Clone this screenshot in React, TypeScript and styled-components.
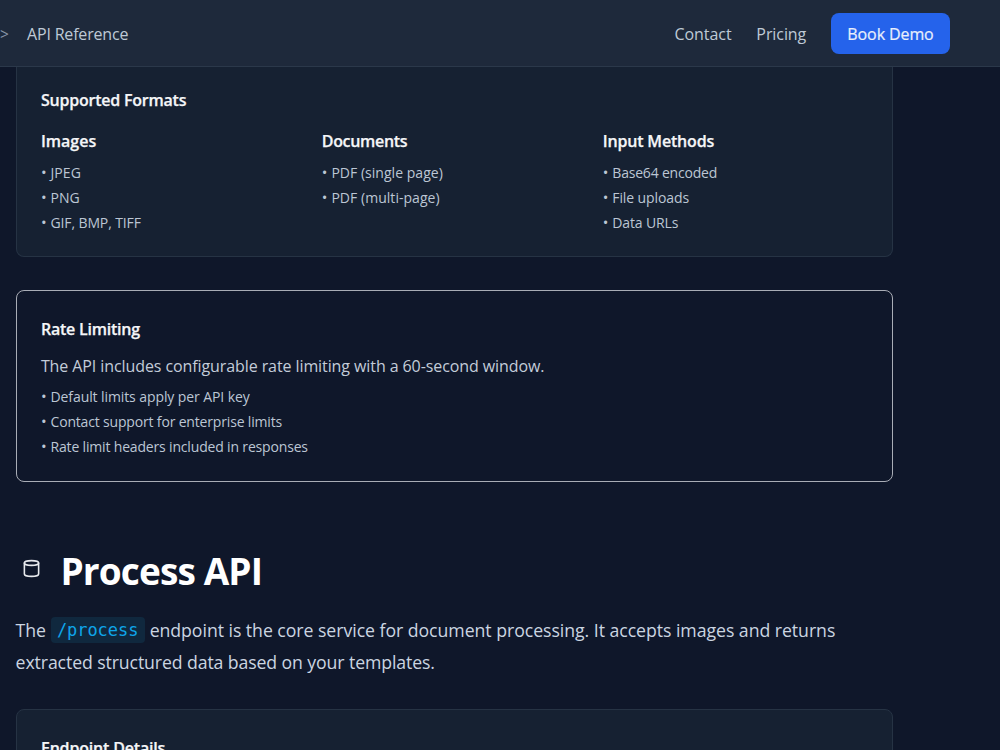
import styled, { createGlobalStyle } from "styled-components";

const Global = createGlobalStyle`
  * { box-sizing: border-box; margin: 0; padding: 0; }
  body { background: #0f172a; overflow: hidden; font-family: "Open Sans", "Noto Sans", sans-serif; }
`;
const Page = styled.div`display: flex; flex-direction: column; height: 750px; overflow: hidden; background: #0f172a;`;
const Header = styled.header`
  display: flex; align-items: center; flex: none; height: 67px; padding-right: 50px;
  background: #1e293b; border-bottom: 1px solid #2b384a; color: #bfc9d6; font-size: 16px; line-height: 24px;
`;
const Crumb = styled.span`width: 27px; padding-top: 2px; color: #8793a6; font-size: 15.5px;`;
const Label = styled.span<{ $ls?: number; $drop?: number }>`
  padding-top: ${p => p.$drop ?? 0}px; letter-spacing: ${p => p.$ls ?? 0}px; white-space: nowrap;
`;
const Nav = styled.nav`display: flex; align-items: center; margin-left: auto;`;
const NavLink = styled.a<{ $ls: number }>`padding-top: 2px; letter-spacing: ${p => p.$ls}px; margin-right: 24.8px;`;
const Demo = styled.button`
  width: 119px; height: 41px; padding-top: 1px; border: 0; border-radius: 8px; background: #2563eb; color: #e9effc;
  font: 500 16px "Open Sans", sans-serif; letter-spacing: -0.1px; text-align: center; -webkit-text-stroke: 0.2px #e9effc;
`;
const Main = styled.main`display: flex; flex-direction: column; flex: 1; min-height: 0; width: 892.6px; padding-left: 15.6px;`;
const Card = styled.section<{ $h: number; $kind?: "top" | "outline" }>`
  flex: none; height: ${p => p.$h}px; padding: ${p => (p.$kind === "top" ? 21 : 26)}px 24px 0 24.3px;
  border: 1px solid ${p => (p.$kind === "outline" ? "#a9adb6" : "#263344")};
  background: ${p => (p.$kind === "outline" ? "transparent" : "#162132")};
  border-radius: ${p => (p.$kind === "top" ? "0 0 8px 8px" : "8px")};
  margin-top: ${p => (p.$kind === "outline" ? 33 : 0)}px;
  ${p => p.$kind === "top" && "border-top: 0;"}
`;
const Heading = styled.h4<{ $ls: number; $gap?: number }>`
  color: #f5f6f8; font-size: 16px; font-weight: 600; line-height: 25px; letter-spacing: ${p => p.$ls}px;
  margin-bottom: ${p => p.$gap ?? 0}px; white-space: nowrap; -webkit-text-stroke: 0.25px #f5f6f8;
`;
const Columns = styled.div`display: grid; grid-template-columns: repeat(3, 1fr); column-gap: 16px;`;
const List = styled.ul`list-style: none; color: #bcc6d4; font-size: 14px; line-height: 25px;`;
const Item = styled.li<{ $ls: number }>`display: flex; letter-spacing: ${p => p.$ls}px; white-space: nowrap;`;
const Dot = styled.span`width: 9.6px; font-size: 15px; letter-spacing: 0;`;
const Note = styled.p`color: #c3ccd9; font-size: 16px; line-height: 25px; letter-spacing: -0.09px; margin-bottom: 5px;`;
const TitleRow = styled.div`display: flex; align-items: center; flex: none; height: 46px; margin-top: 67px; padding-left: 6.4px;`;
const Cylinder = styled.svg`display: block; width: 19px; height: 19px; margin: -7px 19.5px 0 0;`;
const Title = styled.h2`margin-top: -3px; color: #fff; font-size: 37px; font-weight: 700; line-height: 46px; letter-spacing: -0.88px;`;
const Lead = styled.div`flex: none; margin: 19px 0 31px; color: #cbd5e1; font-size: 17.7px; line-height: 32px;`;
const Line = styled.div`display: flex; height: 32px; white-space: nowrap;`;
const Code = styled.code`
  height: 26px; width: 94px; margin: 3px 5px 0 4.8px; border-radius: 4px; background: #10283e; color: #0ea5e9;
  font: 17px/27px "DejaVu Sans Mono", monospace; letter-spacing: -0.05px; text-align: center;
`;

type Entry = [string, number];
const formats: { title: Entry; items: Entry[] }[] = [
  { title: ["Images", 0], items: [["JPEG", 0.1], ["PNG", 0.05], ["GIF, BMP, TIFF", -0.12]] },
  { title: ["Documents", -0.33], items: [["PDF (single page)", 0.03], ["PDF (multi-page)", 0.04]] },
  { title: ["Input Methods", -0.17], items: [["Base64 encoded", -0.2], ["File uploads", -0.1], ["Data URLs", -0.13]] },
];
const limits: Entry[] = [
  ["Default limits apply per API key", -0.09],
  ["Contact support for enterprise limits", -0.17],
  ["Rate limit headers included in responses", -0.17],
];
const Bullets = ({ items }: { items: Entry[] }) => (
  <List>{items.map(([text, ls]) => <Item key={text} $ls={ls}><Dot>•</Dot>{text}</Item>)}</List>
);

export default function App() {
  return (
    <Page>
      <Global />
      <Header>
        <Crumb>&gt;</Crumb>
        <Label $ls={-0.18} $drop={2}>API Reference</Label>
        <Nav>
          <NavLink $ls={-0.05}>Contact</NavLink>
          <NavLink $ls={-0.08}>Pricing</NavLink>
          <Demo>Book Demo</Demo>
        </Nav>
      </Header>
      <Main>
        <Card $h={190} $kind="top">
          <Heading $ls={-0.22} $gap={16}>Supported Formats</Heading>
          <Columns>
            {formats.map(f => (
              <div key={f.title[0]}>
                <Heading $ls={f.title[1]} $gap={6}>{f.title[0]}</Heading>
                <Bullets items={f.items} />
              </div>
            ))}
          </Columns>
        </Card>
        <Card $h={192} $kind="outline">
          <Heading $ls={-0.22} $gap={12}>Rate Limiting</Heading>
          <Note>The API includes configurable rate limiting with a 60-second window.</Note>
          <Bullets items={limits} />
        </Card>
        <TitleRow>
          <Cylinder viewBox="0 0 24 24" fill="none" stroke="#e8eaee" strokeWidth="2" strokeLinecap="round" strokeLinejoin="round">
            <ellipse cx="12" cy="5" rx="9" ry="3" />
            <path d="M3 5v14a9 3 0 0 0 18 0V5" />
          </Cylinder>
          <Title>Process API</Title>
        </TitleRow>
        <Lead>
          <Line>
            <Label $ls={-0.1}>The</Label>
            <Code>/process</Code>
            <Label $ls={-0.045}>endpoint is the core service for document processing. It accepts images and returns</Label>
          </Line>
          <Line><Label $ls={-0.11}>extracted structured data based on your templates.</Label></Line>
        </Lead>
        <Card $h={192}>
          <Heading $ls={-0.18}>Endpoint Details</Heading>
        </Card>
      </Main>
    </Page>
  );
}
